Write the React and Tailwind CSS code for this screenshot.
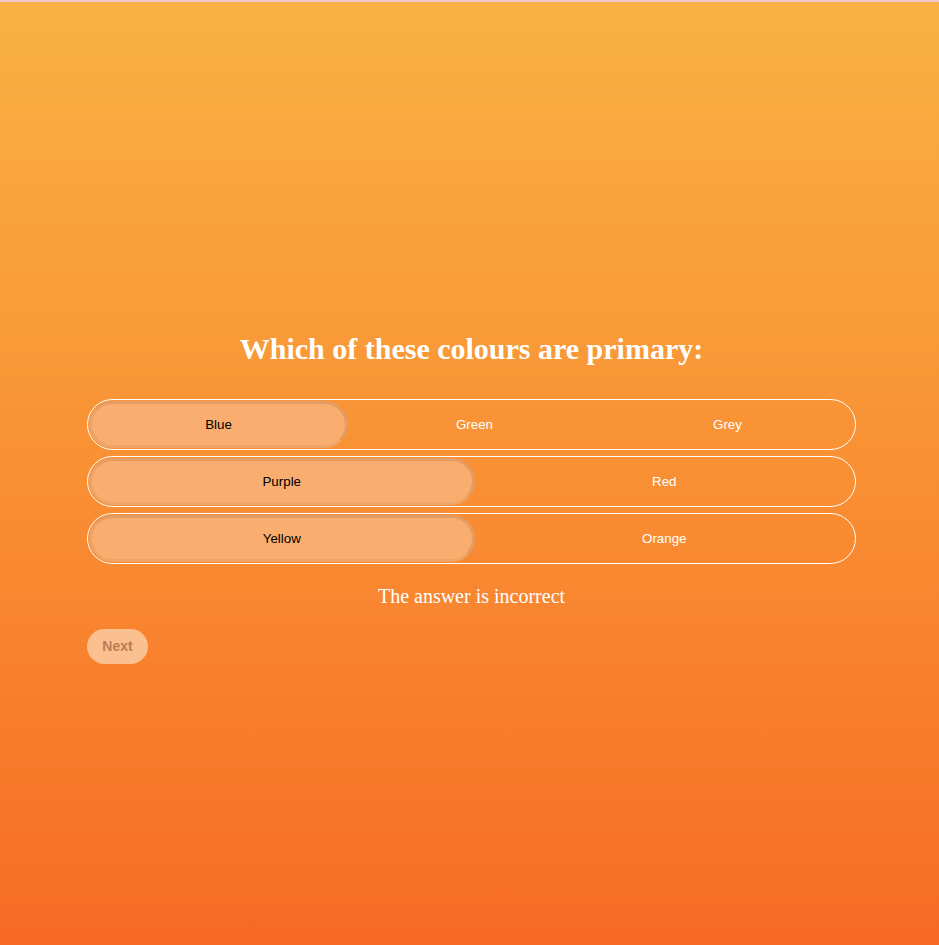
export default function App() {
  const rows = [
    { opts: ["Blue", "Green", "Grey"], sel: 0 },
    { opts: ["Purple", "Red"], sel: 0 },
    { opts: ["Yellow", "Orange"], sel: 0 },
  ];
  return (
    <div className="w-full h-[945px] flex flex-col bg-gradient-to-b from-[#f8b243] to-[#f76a24]">
      <div className="h-[2px] bg-[#f3c6cc] shrink-0" />
      <div className="flex flex-col pl-[87px] w-[856px] pt-[329px]">
        <h1 className="text-center text-white font-bold text-[30px] leading-[36px] font-['Liberation_Serif',serif]">
          Which of these colours are primary:
        </h1>
        <div className="flex flex-col gap-[6px] mt-[32px]">
          {rows.map((r, i) => (
            <div key={i} className="flex h-[51px] border border-white rounded-full p-[1px]">
              {r.opts.map((o, j) => (
                <button
                  key={j}
                  className={
                    "flex-[1_1_0] rounded-full flex items-center justify-center pt-[1px] text-[13.33px] font-['Liberation_Sans',Arial,sans-serif] " +
                    (j === r.sel
                      ? "bg-[#f9ae6f] text-black border-[3px] border-[rgba(205,135,85,0.45)] border-b-[rgba(205,135,85,0.2)] border-l-[rgba(205,135,85,0.25)]"
                      : "text-white")
                  }
                >
                  {o}
                </button>
              ))}
            </div>
          ))}
        </div>
        <p className="text-center text-white text-[20px] leading-[23px] mt-[21px] font-['Liberation_Serif',serif]">
          The answer is incorrect
        </p>
        <div className="mt-[21px]">
          <button className="h-[35px] w-[61px] rounded-full bg-[#fbc08f] text-[#b87c55] font-bold text-[14px] font-['Liberation_Sans',Arial,sans-serif]">
            Next
          </button>
        </div>
      </div>
    </div>
  );
}
